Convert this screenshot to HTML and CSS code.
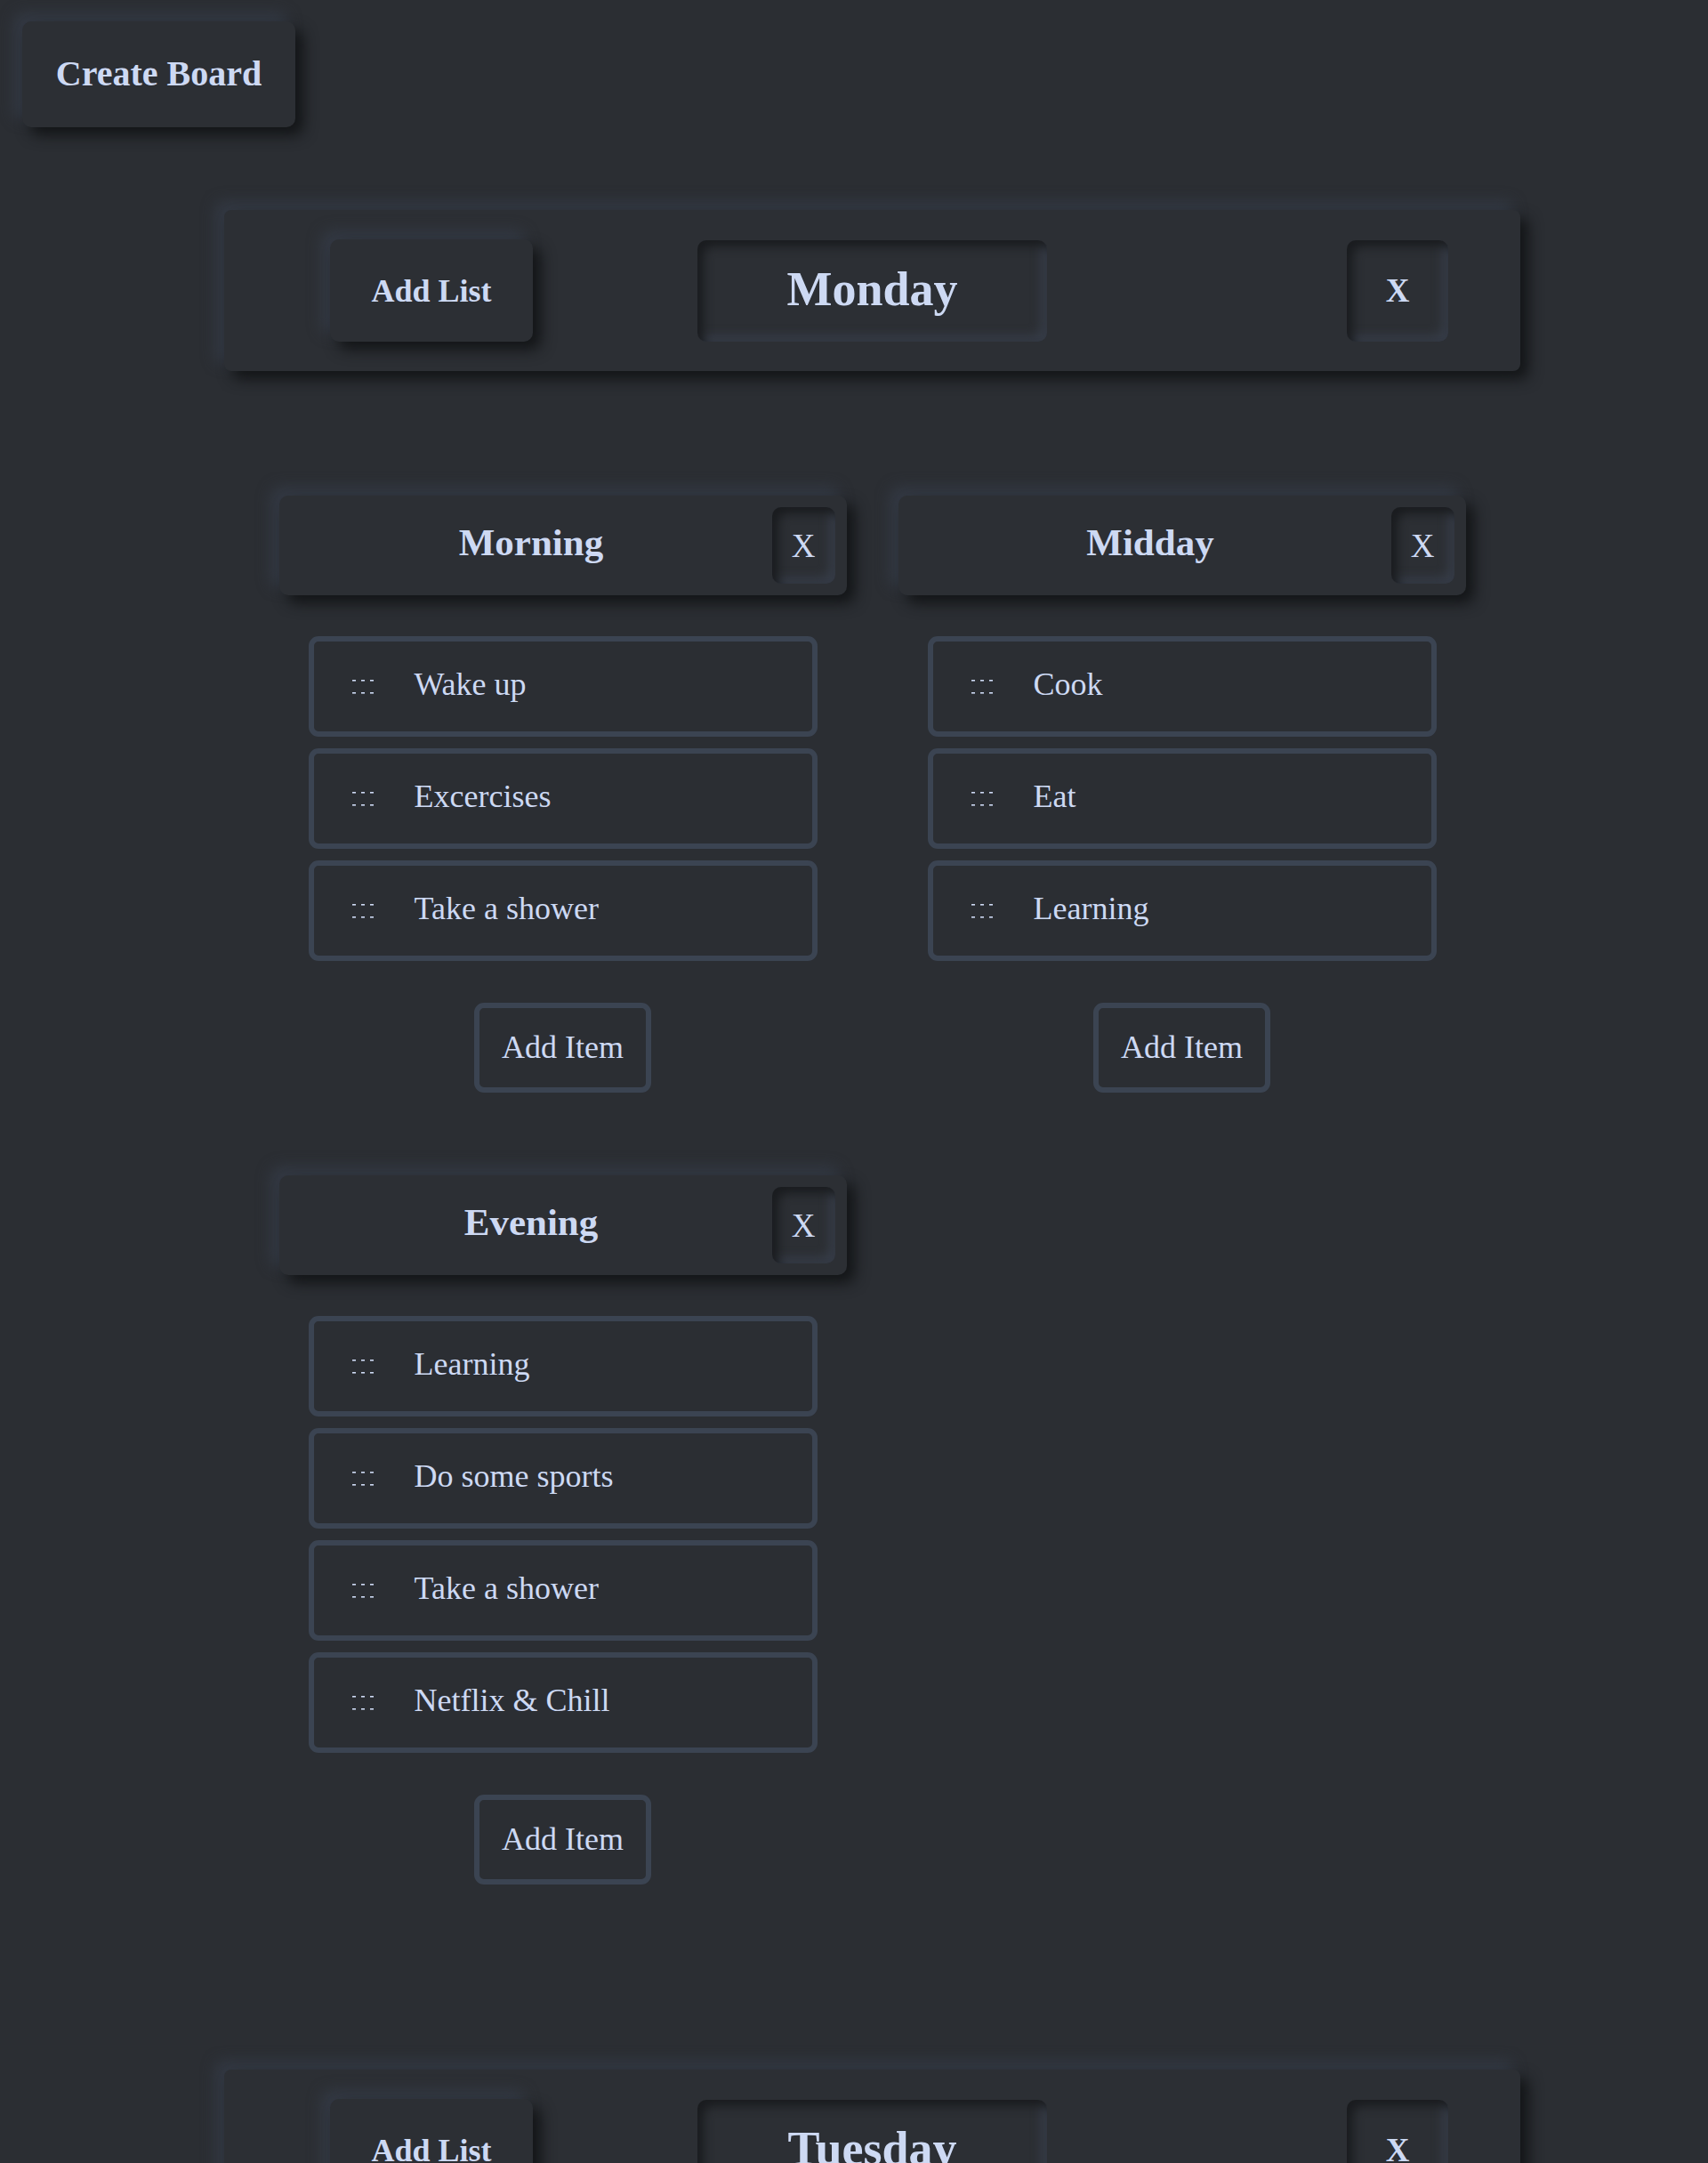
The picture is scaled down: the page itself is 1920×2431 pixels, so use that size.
FILE: index.html
```html
<!DOCTYPE html>
<html lang="en">
<head>
<meta charset="utf-8">
<title>Boards</title>
<link rel="stylesheet" href="styles.css">
</head>
<body>
<div class="app">
  <button class="raised create">Create Board</button>

  <section class="board">
    <header class="board-bar">
      <div class="bar-left"><button class="raised add-list">Add List</button></div>
      <h1 class="inset board-title">Monday</h1>
      <div class="bar-right"><button class="inset close-board">X</button></div>
    </header>
    <div class="lists">
      <div class="list">
        <div class="raised list-head"><h2 class="list-title">Morning</h2><button class="inset close-list">X</button></div>
        <ul class="items">
          <li class="item"><span class="grip" aria-hidden="true"><svg width="30" height="16" viewBox="0 0 30 16"><g fill="#cdd9f3"><rect x="1" y="0" width="4" height="1.6"/><rect x="11" y="0" width="4" height="1.6"/><rect x="21" y="0" width="4" height="1.6"/><rect x="1" y="14" width="4" height="1.6"/><rect x="11" y="14" width="4" height="1.6"/><rect x="21" y="14" width="4" height="1.6"/></g></svg></span><span class="item-text">Wake up</span></li>
          <li class="item"><span class="grip" aria-hidden="true"><svg width="30" height="16" viewBox="0 0 30 16"><g fill="#cdd9f3"><rect x="1" y="0" width="4" height="1.6"/><rect x="11" y="0" width="4" height="1.6"/><rect x="21" y="0" width="4" height="1.6"/><rect x="1" y="14" width="4" height="1.6"/><rect x="11" y="14" width="4" height="1.6"/><rect x="21" y="14" width="4" height="1.6"/></g></svg></span><span class="item-text">Excercises</span></li>
          <li class="item"><span class="grip" aria-hidden="true"><svg width="30" height="16" viewBox="0 0 30 16"><g fill="#cdd9f3"><rect x="1" y="0" width="4" height="1.6"/><rect x="11" y="0" width="4" height="1.6"/><rect x="21" y="0" width="4" height="1.6"/><rect x="1" y="14" width="4" height="1.6"/><rect x="11" y="14" width="4" height="1.6"/><rect x="21" y="14" width="4" height="1.6"/></g></svg></span><span class="item-text">Take a shower</span></li>
        </ul>
        <button class="add-item">Add Item</button>
      </div>

      <div class="list">
        <div class="raised list-head"><h2 class="list-title">Midday</h2><button class="inset close-list">X</button></div>
        <ul class="items">
          <li class="item"><span class="grip" aria-hidden="true"><svg width="30" height="16" viewBox="0 0 30 16"><g fill="#cdd9f3"><rect x="1" y="0" width="4" height="1.6"/><rect x="11" y="0" width="4" height="1.6"/><rect x="21" y="0" width="4" height="1.6"/><rect x="1" y="14" width="4" height="1.6"/><rect x="11" y="14" width="4" height="1.6"/><rect x="21" y="14" width="4" height="1.6"/></g></svg></span><span class="item-text">Cook</span></li>
          <li class="item"><span class="grip" aria-hidden="true"><svg width="30" height="16" viewBox="0 0 30 16"><g fill="#cdd9f3"><rect x="1" y="0" width="4" height="1.6"/><rect x="11" y="0" width="4" height="1.6"/><rect x="21" y="0" width="4" height="1.6"/><rect x="1" y="14" width="4" height="1.6"/><rect x="11" y="14" width="4" height="1.6"/><rect x="21" y="14" width="4" height="1.6"/></g></svg></span><span class="item-text">Eat</span></li>
          <li class="item"><span class="grip" aria-hidden="true"><svg width="30" height="16" viewBox="0 0 30 16"><g fill="#cdd9f3"><rect x="1" y="0" width="4" height="1.6"/><rect x="11" y="0" width="4" height="1.6"/><rect x="21" y="0" width="4" height="1.6"/><rect x="1" y="14" width="4" height="1.6"/><rect x="11" y="14" width="4" height="1.6"/><rect x="21" y="14" width="4" height="1.6"/></g></svg></span><span class="item-text">Learning</span></li>
        </ul>
        <button class="add-item">Add Item</button>
      </div>

      <div class="list">
        <div class="raised list-head"><h2 class="list-title">Evening</h2><button class="inset close-list">X</button></div>
        <ul class="items">
          <li class="item"><span class="grip" aria-hidden="true"><svg width="30" height="16" viewBox="0 0 30 16"><g fill="#cdd9f3"><rect x="1" y="0" width="4" height="1.6"/><rect x="11" y="0" width="4" height="1.6"/><rect x="21" y="0" width="4" height="1.6"/><rect x="1" y="14" width="4" height="1.6"/><rect x="11" y="14" width="4" height="1.6"/><rect x="21" y="14" width="4" height="1.6"/></g></svg></span><span class="item-text">Learning</span></li>
          <li class="item"><span class="grip" aria-hidden="true"><svg width="30" height="16" viewBox="0 0 30 16"><g fill="#cdd9f3"><rect x="1" y="0" width="4" height="1.6"/><rect x="11" y="0" width="4" height="1.6"/><rect x="21" y="0" width="4" height="1.6"/><rect x="1" y="14" width="4" height="1.6"/><rect x="11" y="14" width="4" height="1.6"/><rect x="21" y="14" width="4" height="1.6"/></g></svg></span><span class="item-text">Do some sports</span></li>
          <li class="item"><span class="grip" aria-hidden="true"><svg width="30" height="16" viewBox="0 0 30 16"><g fill="#cdd9f3"><rect x="1" y="0" width="4" height="1.6"/><rect x="11" y="0" width="4" height="1.6"/><rect x="21" y="0" width="4" height="1.6"/><rect x="1" y="14" width="4" height="1.6"/><rect x="11" y="14" width="4" height="1.6"/><rect x="21" y="14" width="4" height="1.6"/></g></svg></span><span class="item-text">Take a shower</span></li>
          <li class="item"><span class="grip" aria-hidden="true"><svg width="30" height="16" viewBox="0 0 30 16"><g fill="#cdd9f3"><rect x="1" y="0" width="4" height="1.6"/><rect x="11" y="0" width="4" height="1.6"/><rect x="21" y="0" width="4" height="1.6"/><rect x="1" y="14" width="4" height="1.6"/><rect x="11" y="14" width="4" height="1.6"/><rect x="21" y="14" width="4" height="1.6"/></g></svg></span><span class="item-text">Netflix &amp; Chill</span></li>
        </ul>
        <button class="add-item">Add Item</button>
      </div>
    </div>
  </section>

  <section class="board">
    <header class="board-bar">
      <div class="bar-left"><button class="raised add-list">Add List</button></div>
      <h1 class="inset board-title">Tuesday</h1>
      <div class="bar-right"><button class="inset close-board">X</button></div>
    </header>
  </section>
</div>
</body>
</html>
```

FILE: styles.css
```css
* { box-sizing: border-box; }

html, body {
  margin: 0;
  padding: 0;
  background: #2b2e33;
}

body {
  font-family: "Liberation Serif", "Times New Roman", serif;
  color: #cdd9f3;
  overflow: hidden;
}

button {
  font-family: inherit;
  color: inherit;
  border: none;
  background: #2c2f34;
  cursor: pointer;
  padding: 0;
  margin: 0;
}

.app {
  padding: 24px 0 0 25px;
}

.raised {
  background: #2c2f34;
  box-shadow: 9px 9px 16px #131517, -9px -9px 16px #343a45;
}

.inset {
  background: #2c2f34;
  box-shadow: inset 7px 7px 11px #1a1c1f, inset -7px -7px 11px #363c47;
}

.create {
  display: block;
  width: 307px;
  height: 119px;
  border-radius: 10px;
  font-size: 40px;
  font-weight: bold;
  padding-bottom: 3px;
}

.board {
  width: 1457px;
  margin-left: 227px;
  margin-top: 93px;
}

.board-bar {
  display: grid;
  grid-template-columns: 1fr auto 1fr;
  align-items: center;
  height: 181px;
  border-radius: 8px;
  background: #2c2f34;
  box-shadow: 9px 9px 16px #131517, -9px -9px 16px #343a45;
}

.bar-left {
  display: flex;
  justify-content: flex-start;
  padding-left: 119px;
}

.bar-right {
  display: flex;
  justify-content: flex-end;
  padding-right: 81px;
}

.add-list {
  width: 228px;
  height: 115px;
  border-radius: 10px;
  font-size: 36px;
  font-weight: bold;
}

.board-title {
  margin: 0;
  width: 393px;
  height: 114px;
  border-radius: 10px;
  display: flex;
  align-items: center;
  justify-content: center;
  font-size: 54px;
  font-weight: bold;
  padding-bottom: 3px;
}

.close-board {
  width: 114px;
  height: 114px;
  border-radius: 10px;
  font-size: 37px;
  font-weight: bold;
}

.lists {
  display: grid;
  grid-template-columns: repeat(2, 638px);
  column-gap: 58px;
  row-gap: 93px;
  justify-content: center;
  align-items: start;
  padding-top: 140px;
  padding-bottom: 115px;
}

.list {
  display: flex;
  flex-direction: column;
  align-items: center;
}

.list-head {
  width: 638px;
  height: 112px;
  border-radius: 10px;
  display: flex;
  align-items: center;
  padding: 0 13px;
}

.list-title {
  flex: 1;
  margin: 0;
  text-align: center;
  font-size: 43px;
  font-weight: bold;
  padding-bottom: 8px;
}

.close-list {
  width: 71px;
  height: 86px;
  border-radius: 10px;
  font-size: 37px;
  font-weight: normal;
}

.items {
  list-style: none;
  margin: 46px 0 0;
  padding: 0;
  display: flex;
  flex-direction: column;
  gap: 13px;
}

.item {
  width: 572px;
  height: 113px;
  border: 6px solid #3b4452;
  border-radius: 11px;
  display: flex;
  align-items: center;
  padding-left: 42px;
  font-size: 36px;
}

.item-text {
  padding-bottom: 5px;
}

.grip {
  display: flex;
  width: 30px;
  margin-right: 41px;
}

.grip svg {
  display: block;
}

.add-item {
  margin-top: 47px;
  width: 199px;
  height: 101px;
  border: 6px solid #3b4452;
  border-radius: 11px;
  background: transparent;
  font-size: 36px;
  padding-bottom: 2px;
}
```
